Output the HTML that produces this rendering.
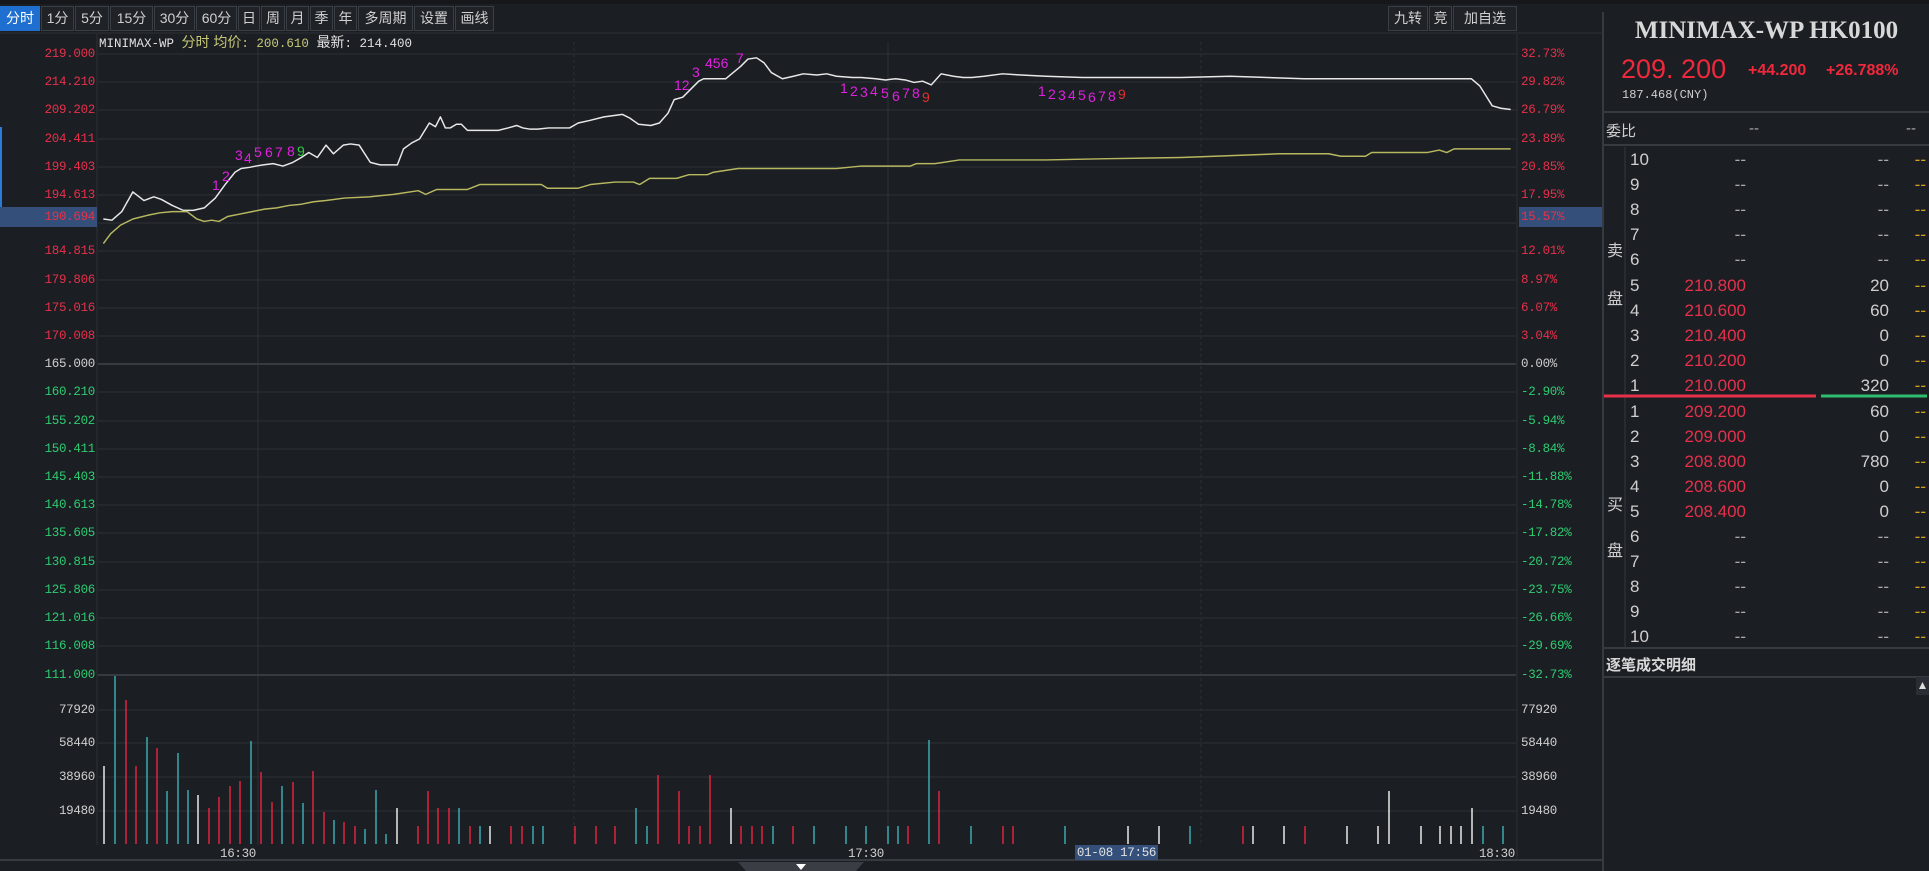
<!DOCTYPE html>
<html><head><meta charset="utf-8">
<style>
*{margin:0;padding:0;box-sizing:border-box}
body{width:1929px;height:871px;overflow:hidden;background:#1b1e23;font-family:"Liberation Sans","Noto Sans CJK SC",sans-serif;position:relative;color:#c8c8c8}
.a{position:absolute;white-space:nowrap}
.tb{position:absolute;top:6px;height:25px;border:1px solid #3a3e45;background:#1f2227;color:#d0d0d0;font-size:14px;line-height:23px;text-align:center}
.lab{position:absolute;font-family:"Liberation Mono",monospace;font-size:12.5px;line-height:16px;letter-spacing:-0.3px;white-space:nowrap}
.l{right:1834px;text-align:right}
.r{left:1521px}
.red{color:#e8304a}.grn{color:#2ecc71}.gry{color:#cfcfcf}
.row{position:absolute;left:1603px;width:326px;height:25px;font-size:17px;line-height:25px}
.row span{position:absolute}
.td{position:absolute;font-family:"Liberation Sans",sans-serif;font-size:14px;color:#e020e0;line-height:14px}
</style></head><body>
<!-- top strip -->
<div class="a" style="left:0;top:0;width:1929px;height:4px;background:#15171b"></div>
<!-- toolbar -->
<div class="tb" style="left:0;width:40px;background:#1e6fd0;color:#fff;border-color:#1e6fd0">分时</div>
<div class="tb" style="left:41px;width:33px">1分</div>
<div class="tb" style="left:75px;width:34px">5分</div>
<div class="tb" style="left:110px;width:43px">15分</div>
<div class="tb" style="left:154px;width:41px">30分</div>
<div class="tb" style="left:196px;width:41px">60分</div>
<div class="tb" style="left:238px;width:22px">日</div>
<div class="tb" style="left:261px;width:24px">周</div>
<div class="tb" style="left:286px;width:23px">月</div>
<div class="tb" style="left:310px;width:23px">季</div>
<div class="tb" style="left:334px;width:23px">年</div>
<div class="tb" style="left:358px;width:55px">多周期</div>
<div class="tb" style="left:414px;width:40px">设置</div>
<div class="tb" style="left:455px;width:39px">画线</div>
<div class="tb" style="left:1388px;width:40px">九转</div>
<div class="tb" style="left:1429px;width:23px">竞</div>
<div class="tb" style="left:1453px;width:64px">加自选</div>

<div class="a" style="left:0;top:127px;width:2px;height:80px;background:#2a7ad8"></div>

<svg class="a" style="left:0;top:0" width="1929" height="871">
<g stroke="#2c3036" stroke-width="1">
<line x1="98" y1="54" x2="1516" y2="54"/><line x1="98" y1="82" x2="1516" y2="82"/><line x1="98" y1="110" x2="1516" y2="110"/><line x1="98" y1="139" x2="1516" y2="139"/><line x1="98" y1="167" x2="1516" y2="167"/><line x1="98" y1="195" x2="1516" y2="195"/><line x1="98" y1="223" x2="1516" y2="223"/><line x1="98" y1="251" x2="1516" y2="251"/><line x1="98" y1="280" x2="1516" y2="280"/><line x1="98" y1="308" x2="1516" y2="308"/><line x1="98" y1="336" x2="1516" y2="336"/>
<line x1="98" y1="392" x2="1516" y2="392"/><line x1="98" y1="421" x2="1516" y2="421"/><line x1="98" y1="449" x2="1516" y2="449"/><line x1="98" y1="477" x2="1516" y2="477"/><line x1="98" y1="505" x2="1516" y2="505"/><line x1="98" y1="533" x2="1516" y2="533"/><line x1="98" y1="562" x2="1516" y2="562"/><line x1="98" y1="590" x2="1516" y2="590"/><line x1="98" y1="618" x2="1516" y2="618"/><line x1="98" y1="646" x2="1516" y2="646"/>
<line x1="98" y1="710" x2="1516" y2="710"/><line x1="98" y1="743" x2="1516" y2="743"/><line x1="98" y1="777" x2="1516" y2="777"/><line x1="98" y1="811" x2="1516" y2="811"/>
<line x1="258" y1="42" x2="258" y2="845"/><line x1="888" y1="42" x2="888" y2="845"/>
<line x1="574" y1="42" x2="574" y2="845" stroke-dasharray="3,3"/><line x1="1201" y1="42" x2="1201" y2="845" stroke-dasharray="3,3"/>
</g>
<g stroke="#363a41" stroke-width="2">
<line x1="98" y1="364" x2="1516" y2="364"/><line x1="98" y1="675" x2="1516" y2="675"/>
<line x1="0" y1="860" x2="1603" y2="860"/>
</g>
<line x1="97" y1="34" x2="97" y2="845" stroke="#2c3036"/>
<line x1="1517" y1="34" x2="1517" y2="860" stroke="#2c3036"/>
<line x1="1603" y1="12" x2="1603" y2="871" stroke="#363a41" stroke-width="2"/>
<line x1="0" y1="33" x2="1603" y2="33" stroke="#2c3036"/>
<!-- highlight boxes -->
<rect x="0" y="207" width="97" height="20" fill="#34507a"/>
<rect x="1519" y="207" width="83" height="20" fill="#34507a"/>
<!-- lines in display coords -->
<g transform="scale(1.2302)" fill="none" stroke-linejoin="round">
<polyline stroke="#e8e8e8" stroke-width="1.2" points="84,178 91,179 99,172 108,156 117,163 125,160 131,162 140,167 149,171 157,171 166,169 175,161 183,150 191,140 196,137 203,136 208,135 214,134 222,133 230,135 238,132 245,128 251,124 258,128 265,118 271,125 279,118 285,117 292,118 301,132 309,134 323,134 328,121 335,116 341,113 349,100 354,103 358,95 362,104 366,104 371,101 375,101 380,106 387,106 392,106 405,106 413,104 420,102 425,104 431,105 437,105 446,104 463,104 470,100 479,98 491,95 506,93 512,96 519,101 529,102 536,100 543,92 548,81 555,79 562,72 568,66 572,64 579,64 590,64 596,59 602,54 608,48 615,47 621,51 627,59 636,64 645,62 653,60 664,61 672,60 680,62 693,63 700,63 712,64 720,65 728,64 736,65 743,67 750,66 757,69 765,60 775,62 783,63 790,63 800,62 815,60 830,61 850,62 880,63 905,63 960,63 1000,62 1060,64 1100,64 1150,64 1180,64 1196,64 1203,70 1208,78 1213,86 1220,88 1228,89"/>
<polyline stroke="#b8b860" stroke-width="1.2" points="84,198 90,190 98,183 108,178 120,175 130,173 140,172 152,172 160,178 166,180 172,179 178,180 185,176 195,174 205,172 215,170 225,169 235,167 245,166 255,164 265,163 280,161 300,160 320,158 340,155 346,158 355,154 380,154 390,150 440,150 445,153 470,153 480,150 500,148 515,148 520,150 528,145 550,145 560,142 575,142 580,140 600,137 620,137 680,137 690,136 700,135 740,135 745,133 760,133 780,130 850,130 900,129 960,128 1040,125 1080,125 1090,127 1110,127 1115,124 1160,124 1170,122 1176,124 1182,121 1228,121"/>
</g>
<!-- volume bars -->
<g stroke-width="1.5">
<g stroke="#e8e8e8"><line x1="104" y1="766" x2="104" y2="844"/><line x1="198" y1="795" x2="198" y2="844"/><line x1="397" y1="808" x2="397" y2="844"/><line x1="490" y1="826" x2="490" y2="844"/><line x1="731" y1="808" x2="731" y2="844"/><line x1="1128" y1="826" x2="1128" y2="844"/><line x1="1159" y1="826" x2="1159" y2="844"/><line x1="1253" y1="826" x2="1253" y2="844"/><line x1="1284" y1="826" x2="1284" y2="844"/><line x1="1347" y1="826" x2="1347" y2="844"/><line x1="1378" y1="826" x2="1378" y2="844"/><line x1="1389" y1="791" x2="1389" y2="844"/><line x1="1421" y1="826" x2="1421" y2="844"/><line x1="1440" y1="826" x2="1440" y2="844"/><line x1="1451" y1="826" x2="1451" y2="844"/><line x1="1461" y1="826" x2="1461" y2="844"/><line x1="1472" y1="808" x2="1472" y2="844"/></g>
<g stroke="#3aa8b0"><line x1="115" y1="676" x2="115" y2="844"/><line x1="147" y1="737" x2="147" y2="844"/><line x1="167" y1="791" x2="167" y2="844"/><line x1="178" y1="753" x2="178" y2="844"/><line x1="188" y1="790" x2="188" y2="844"/><line x1="251" y1="741" x2="251" y2="844"/><line x1="282" y1="786" x2="282" y2="844"/><line x1="303" y1="803" x2="303" y2="844"/><line x1="334" y1="820" x2="334" y2="844"/><line x1="365" y1="829" x2="365" y2="844"/><line x1="376" y1="790" x2="376" y2="844"/><line x1="386" y1="834" x2="386" y2="844"/><line x1="459" y1="808" x2="459" y2="844"/><line x1="480" y1="826" x2="480" y2="844"/><line x1="533" y1="826" x2="533" y2="844"/><line x1="543" y1="826" x2="543" y2="844"/><line x1="636" y1="808" x2="636" y2="844"/><line x1="647" y1="826" x2="647" y2="844"/><line x1="773" y1="826" x2="773" y2="844"/><line x1="814" y1="826" x2="814" y2="844"/><line x1="846" y1="826" x2="846" y2="844"/><line x1="866" y1="826" x2="866" y2="844"/><line x1="888" y1="826" x2="888" y2="844"/><line x1="898" y1="826" x2="898" y2="844"/><line x1="929" y1="740" x2="929" y2="844"/><line x1="971" y1="826" x2="971" y2="844"/><line x1="1065" y1="826" x2="1065" y2="844"/><line x1="1190" y1="826" x2="1190" y2="844"/><line x1="1483" y1="826" x2="1483" y2="844"/><line x1="1503" y1="826" x2="1503" y2="844"/></g>
<g stroke="#e0243e"><line x1="126" y1="700" x2="126" y2="844"/><line x1="136" y1="766" x2="136" y2="844"/><line x1="157" y1="748" x2="157" y2="844"/><line x1="209" y1="808" x2="209" y2="844"/><line x1="219" y1="797" x2="219" y2="844"/><line x1="230" y1="786" x2="230" y2="844"/><line x1="240" y1="781" x2="240" y2="844"/><line x1="261" y1="772" x2="261" y2="844"/><line x1="272" y1="802" x2="272" y2="844"/><line x1="293" y1="782" x2="293" y2="844"/><line x1="313" y1="771" x2="313" y2="844"/><line x1="324" y1="812" x2="324" y2="844"/><line x1="344" y1="822" x2="344" y2="844"/><line x1="355" y1="826" x2="355" y2="844"/><line x1="418" y1="826" x2="418" y2="844"/><line x1="428" y1="791" x2="428" y2="844"/><line x1="438" y1="808" x2="438" y2="844"/><line x1="449" y1="808" x2="449" y2="844"/><line x1="470" y1="826" x2="470" y2="844"/><line x1="511" y1="826" x2="511" y2="844"/><line x1="522" y1="826" x2="522" y2="844"/><line x1="575" y1="826" x2="575" y2="844"/><line x1="596" y1="826" x2="596" y2="844"/><line x1="615" y1="826" x2="615" y2="844"/><line x1="658" y1="775" x2="658" y2="844"/><line x1="679" y1="791" x2="679" y2="844"/><line x1="689" y1="826" x2="689" y2="844"/><line x1="700" y1="826" x2="700" y2="844"/><line x1="710" y1="775" x2="710" y2="844"/><line x1="741" y1="826" x2="741" y2="844"/><line x1="752" y1="826" x2="752" y2="844"/><line x1="762" y1="826" x2="762" y2="844"/><line x1="793" y1="826" x2="793" y2="844"/><line x1="908" y1="826" x2="908" y2="844"/><line x1="939" y1="791" x2="939" y2="844"/><line x1="1003" y1="826" x2="1003" y2="844"/><line x1="1013" y1="826" x2="1013" y2="844"/><line x1="1243" y1="826" x2="1243" y2="844"/><line x1="1305" y1="826" x2="1305" y2="844"/></g>
</g>
<!-- bottom tab -->
<polygon points="738,862 864,862 856,871 746,871" fill="#3a3d44"/>
<polygon points="796,864 806,864 801,870" fill="#fff"/>
<!-- right panel lines -->
<line x1="1604" y1="112" x2="1929" y2="112" stroke="#363a41" stroke-width="2"/>
<line x1="1604" y1="145" x2="1929" y2="145" stroke="#363a41" stroke-width="2"/>
<line x1="1625" y1="147" x2="1625" y2="647" stroke="#363a41"/>
<line x1="1604" y1="648" x2="1929" y2="648" stroke="#363a41" stroke-width="2"/>
<line x1="1604" y1="677" x2="1929" y2="677" stroke="#363a41" stroke-width="2"/>
<line x1="1604" y1="396" x2="1816" y2="396" stroke="#e8304a" stroke-width="3"/>
<line x1="1821" y1="396" x2="1927" y2="396" stroke="#2ebd6e" stroke-width="3"/>
<rect x="1916" y="677" width="13" height="18" fill="#2a2d33"/>
<polygon points="1922.5,682 1926,689 1919,689" fill="#ddd"/>
</svg>

<!-- header -->
<div class="a" style="left:99px;top:34px;font-family:'Liberation Mono','Noto Sans CJK SC',monospace;font-size:12.5px;line-height:16px;color:#e0e0e0">MINIMAX-WP <span style="color:#c8c878;font-family:'Liberation Sans','Noto Sans CJK SC',sans-serif;font-size:14px">分时 均价</span><span style="color:#c8c878">: 200.610</span> <span style="font-family:'Liberation Sans','Noto Sans CJK SC',sans-serif;font-size:14px">最新</span>: 214.400</div>

<!-- left labels -->
<div class="lab l red" style="top:46px">219.000</div>
<div class="lab l red" style="top:74px">214.210</div>
<div class="lab l red" style="top:102px">209.202</div>
<div class="lab l red" style="top:131px">204.411</div>
<div class="lab l red" style="top:159px">199.403</div>
<div class="lab l red" style="top:187px">194.613</div>
<div class="lab l red" style="top:209px">190.694</div>
<div class="lab l red" style="top:243px">184.815</div>
<div class="lab l red" style="top:272px">179.806</div>
<div class="lab l red" style="top:300px">175.016</div>
<div class="lab l red" style="top:328px">170.008</div>
<div class="lab l gry" style="top:356px">165.000</div>
<div class="lab l grn" style="top:384px">160.210</div>
<div class="lab l grn" style="top:413px">155.202</div>
<div class="lab l grn" style="top:441px">150.411</div>
<div class="lab l grn" style="top:469px">145.403</div>
<div class="lab l grn" style="top:497px">140.613</div>
<div class="lab l grn" style="top:525px">135.605</div>
<div class="lab l grn" style="top:554px">130.815</div>
<div class="lab l grn" style="top:582px">125.806</div>
<div class="lab l grn" style="top:610px">121.016</div>
<div class="lab l grn" style="top:638px">116.008</div>
<div class="lab l grn" style="top:667px">111.000</div>
<div class="lab l gry" style="top:702px">77920</div>
<div class="lab l gry" style="top:735px">58440</div>
<div class="lab l gry" style="top:769px">38960</div>
<div class="lab l gry" style="top:803px">19480</div>
<!-- right labels -->
<div class="lab r red" style="top:46px">32.73%</div>
<div class="lab r red" style="top:74px">29.82%</div>
<div class="lab r red" style="top:102px">26.79%</div>
<div class="lab r red" style="top:131px">23.89%</div>
<div class="lab r red" style="top:159px">20.85%</div>
<div class="lab r red" style="top:187px">17.95%</div>
<div class="lab r red" style="top:209px">15.57%</div>
<div class="lab r red" style="top:243px">12.01%</div>
<div class="lab r red" style="top:272px">8.97%</div>
<div class="lab r red" style="top:300px">6.07%</div>
<div class="lab r red" style="top:328px">3.04%</div>
<div class="lab r gry" style="top:356px">0.00%</div>
<div class="lab r grn" style="top:384px">-2.90%</div>
<div class="lab r grn" style="top:413px">-5.94%</div>
<div class="lab r grn" style="top:441px">-8.84%</div>
<div class="lab r grn" style="top:469px">-11.88%</div>
<div class="lab r grn" style="top:497px">-14.78%</div>
<div class="lab r grn" style="top:525px">-17.82%</div>
<div class="lab r grn" style="top:554px">-20.72%</div>
<div class="lab r grn" style="top:582px">-23.75%</div>
<div class="lab r grn" style="top:610px">-26.66%</div>
<div class="lab r grn" style="top:638px">-29.69%</div>
<div class="lab r grn" style="top:667px">-32.73%</div>
<div class="lab r gry" style="top:702px">77920</div>
<div class="lab r gry" style="top:735px">58440</div>
<div class="lab r gry" style="top:769px">38960</div>
<div class="lab r gry" style="top:803px">19480</div>
<!-- time labels -->
<div class="lab gry" style="left:220px;top:846px">16:30</div>
<div class="lab gry" style="left:848px;top:846px">17:30</div>
<div class="lab" style="left:1075px;top:845px;width:83px;height:15px;background:#34507a;color:#e0e0e0;text-align:center">01-08 17:56</div>
<div class="lab gry" style="left:1479px;top:846px">18:30</div>

<!-- TD numbers -->
<div class="td" style="left:212px;top:178px">1</div>
<div class="td" style="left:222px;top:169px">2</div>
<div class="td" style="left:235px;top:148px">3</div>
<div class="td" style="left:244px;top:151px">4</div>
<div class="td" style="left:254px;top:145px">5</div>
<div class="td" style="left:265px;top:145px">6</div>
<div class="td" style="left:275px;top:145px">7</div>
<div class="td" style="left:287px;top:144px">8</div>
<div class="td" style="left:297px;top:144px;color:#2ecc40">9</div>
<div class="td" style="left:674px;top:78px">12</div>
<div class="td" style="left:692px;top:65px">3</div>
<div class="td" style="left:705px;top:56px">456</div>
<div class="td" style="left:736px;top:51px">7</div>
<div class="td" style="left:840px;top:81px">1</div>
<div class="td" style="left:850px;top:84px">2</div>
<div class="td" style="left:860px;top:85px">3</div>
<div class="td" style="left:870px;top:84px">4</div>
<div class="td" style="left:881px;top:86px">5</div>
<div class="td" style="left:892px;top:89px">6</div>
<div class="td" style="left:902px;top:86px">7</div>
<div class="td" style="left:912px;top:86px">8</div>
<div class="td" style="left:922px;top:90px;color:#e03030">9</div>
<div class="td" style="left:1038px;top:84px">1</div>
<div class="td" style="left:1048px;top:87px">2</div>
<div class="td" style="left:1058px;top:88px">3</div>
<div class="td" style="left:1068px;top:88px">4</div>
<div class="td" style="left:1078px;top:88px">5</div>
<div class="td" style="left:1088px;top:90px">6</div>
<div class="td" style="left:1098px;top:89px">7</div>
<div class="td" style="left:1108px;top:89px">8</div>
<div class="td" style="left:1118px;top:87px;color:#e03030">9</div>

<!-- right panel -->
<div class="a" style="left:1604px;top:17px;width:325px;text-align:center;font-family:'Liberation Serif',serif;font-weight:bold;font-size:25px;color:#d8d8d8">MINIMAX-WP HK0100</div>
<div class="a" style="left:1621px;top:54px;font-size:27px;color:#f0283c">209. 200</div>
<div class="a" style="left:1748px;top:62px;font-size:16px;font-weight:bold;color:#f0283c">+44.200</div>
<div class="a" style="left:1826px;top:62px;font-size:16px;font-weight:bold;color:#f0283c">+26.788%</div>
<div class="a" style="left:1622px;top:88px;font-family:'Liberation Mono',monospace;font-size:12px;color:#cfcfcf">187.468(CNY)</div>
<div class="a" style="left:1606px;top:120px;font-size:15px;color:#cfcfcf">委比</div>
<div class="a" style="left:1749px;top:120px;font-size:15px;color:#aaa">--</div>
<div class="a" style="left:1906px;top:120px;font-size:15px;color:#aaa">--</div>
<div class="a" style="left:1607px;top:237px;font-size:16px;color:#cfcfcf">卖</div>
<div class="a" style="left:1607px;top:285px;font-size:16px;color:#cfcfcf">盘</div>
<div class="a" style="left:1607px;top:491px;font-size:16px;color:#cfcfcf">买</div>
<div class="a" style="left:1607px;top:537px;font-size:16px;color:#cfcfcf">盘</div>

<div class="row" style="top:147px"><span style="left:27px;color:#cfcfcf">10</span><span style="right:183px;color:#aaa">--</span><span style="right:40px;color:#aaa">--</span><span style="right:3px;color:#d4a017">--</span></div>
<div class="row" style="top:172px"><span style="left:27px;color:#cfcfcf">9</span><span style="right:183px;color:#aaa">--</span><span style="right:40px;color:#aaa">--</span><span style="right:3px;color:#d4a017">--</span></div>
<div class="row" style="top:197px"><span style="left:27px;color:#cfcfcf">8</span><span style="right:183px;color:#aaa">--</span><span style="right:40px;color:#aaa">--</span><span style="right:3px;color:#d4a017">--</span></div>
<div class="row" style="top:222px"><span style="left:27px;color:#cfcfcf">7</span><span style="right:183px;color:#aaa">--</span><span style="right:40px;color:#aaa">--</span><span style="right:3px;color:#d4a017">--</span></div>
<div class="row" style="top:247px"><span style="left:27px;color:#cfcfcf">6</span><span style="right:183px;color:#aaa">--</span><span style="right:40px;color:#aaa">--</span><span style="right:3px;color:#d4a017">--</span></div>
<div class="row" style="top:273px"><span style="left:27px;color:#cfcfcf">5</span><span style="right:183px;color:#e8304a">210.800</span><span style="right:40px;color:#cfcfcf">20</span><span style="right:3px;color:#d4a017">--</span></div>
<div class="row" style="top:298px"><span style="left:27px;color:#cfcfcf">4</span><span style="right:183px;color:#e8304a">210.600</span><span style="right:40px;color:#cfcfcf">60</span><span style="right:3px;color:#d4a017">--</span></div>
<div class="row" style="top:323px"><span style="left:27px;color:#cfcfcf">3</span><span style="right:183px;color:#e8304a">210.400</span><span style="right:40px;color:#cfcfcf">0</span><span style="right:3px;color:#d4a017">--</span></div>
<div class="row" style="top:348px"><span style="left:27px;color:#cfcfcf">2</span><span style="right:183px;color:#e8304a">210.200</span><span style="right:40px;color:#cfcfcf">0</span><span style="right:3px;color:#d4a017">--</span></div>
<div class="row" style="top:373px"><span style="left:27px;color:#cfcfcf">1</span><span style="right:183px;color:#e8304a">210.000</span><span style="right:40px;color:#cfcfcf">320</span><span style="right:3px;color:#d4a017">--</span></div>
<div class="row" style="top:399px"><span style="left:27px;color:#cfcfcf">1</span><span style="right:183px;color:#e8304a">209.200</span><span style="right:40px;color:#cfcfcf">60</span><span style="right:3px;color:#d4a017">--</span></div>
<div class="row" style="top:424px"><span style="left:27px;color:#cfcfcf">2</span><span style="right:183px;color:#e8304a">209.000</span><span style="right:40px;color:#cfcfcf">0</span><span style="right:3px;color:#d4a017">--</span></div>
<div class="row" style="top:449px"><span style="left:27px;color:#cfcfcf">3</span><span style="right:183px;color:#e8304a">208.800</span><span style="right:40px;color:#cfcfcf">780</span><span style="right:3px;color:#d4a017">--</span></div>
<div class="row" style="top:474px"><span style="left:27px;color:#cfcfcf">4</span><span style="right:183px;color:#e8304a">208.600</span><span style="right:40px;color:#cfcfcf">0</span><span style="right:3px;color:#d4a017">--</span></div>
<div class="row" style="top:499px"><span style="left:27px;color:#cfcfcf">5</span><span style="right:183px;color:#e8304a">208.400</span><span style="right:40px;color:#cfcfcf">0</span><span style="right:3px;color:#d4a017">--</span></div>
<div class="row" style="top:524px"><span style="left:27px;color:#cfcfcf">6</span><span style="right:183px;color:#aaa">--</span><span style="right:40px;color:#aaa">--</span><span style="right:3px;color:#d4a017">--</span></div>
<div class="row" style="top:549px"><span style="left:27px;color:#cfcfcf">7</span><span style="right:183px;color:#aaa">--</span><span style="right:40px;color:#aaa">--</span><span style="right:3px;color:#d4a017">--</span></div>
<div class="row" style="top:574px"><span style="left:27px;color:#cfcfcf">8</span><span style="right:183px;color:#aaa">--</span><span style="right:40px;color:#aaa">--</span><span style="right:3px;color:#d4a017">--</span></div>
<div class="row" style="top:599px"><span style="left:27px;color:#cfcfcf">9</span><span style="right:183px;color:#aaa">--</span><span style="right:40px;color:#aaa">--</span><span style="right:3px;color:#d4a017">--</span></div>
<div class="row" style="top:624px"><span style="left:27px;color:#cfcfcf">10</span><span style="right:183px;color:#aaa">--</span><span style="right:40px;color:#aaa">--</span><span style="right:3px;color:#d4a017">--</span></div>
<div class="a" style="left:1606px;top:654px;font-size:15px;font-weight:bold;color:#d8d8d8">逐笔成交明细</div>
</body></html>
